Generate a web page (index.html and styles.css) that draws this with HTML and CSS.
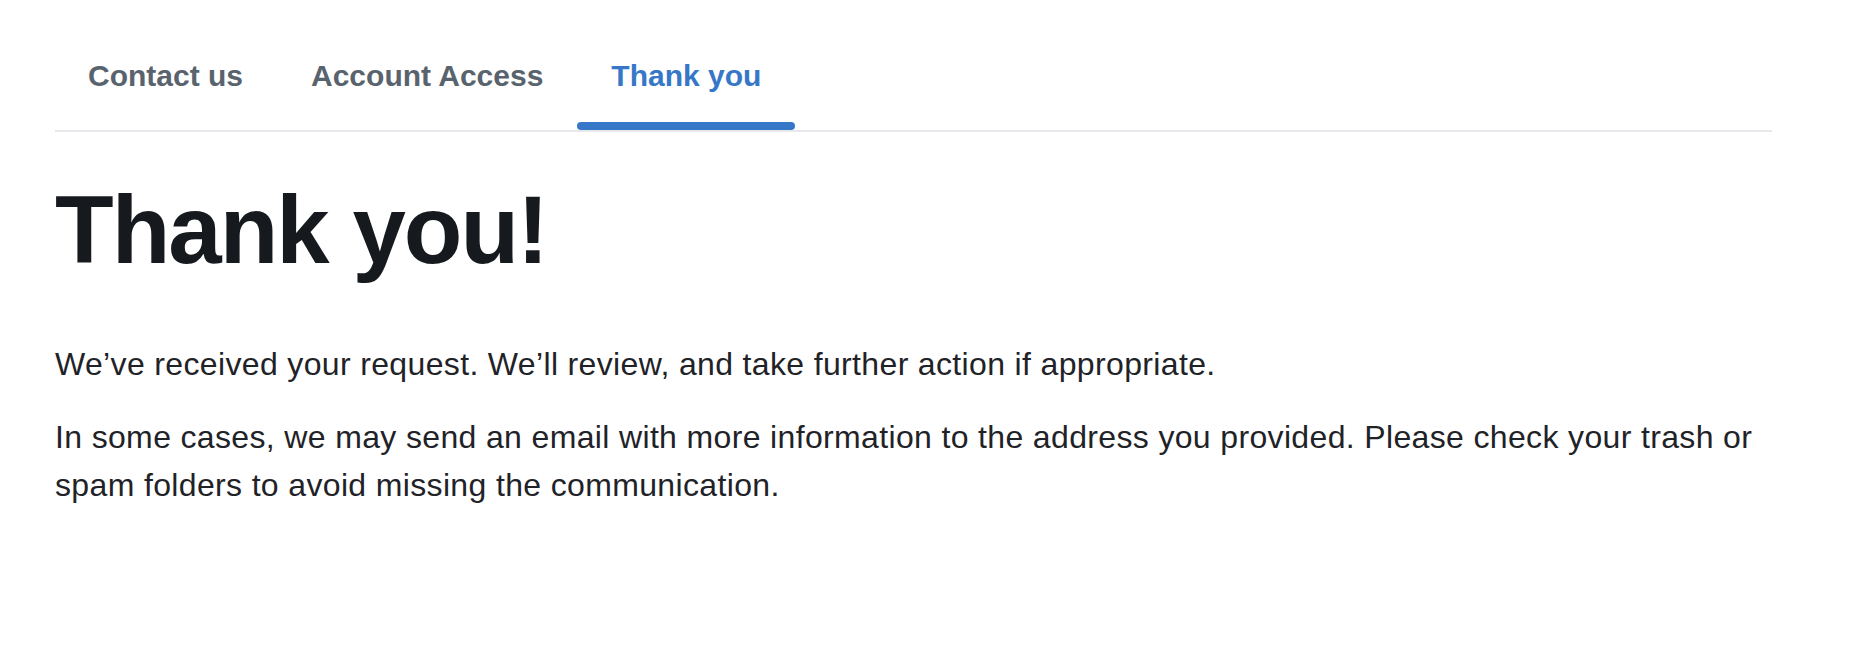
FILE: index.html
```html
<!DOCTYPE html>
<html lang="en">
<head>
  <meta charset="UTF-8" />
  <title>Thank you</title>
  <link rel="stylesheet" href="styles.css">
</head>
<body>
  <div class="container">
    <nav class="tabs">
      <a class="tab" href="#">Contact us</a>
      <a class="tab" href="#">Account Access</a>
      <a class="tab active" href="#">Thank you</a>
    </nav>

    <h1 class="title">Thank you!</h1>

    <p>We’ve received your request. We’ll review, and take further action if appropriate.</p>
    <p>In some cases, we may send an email with more information to the address you provided. Please check your trash or spam folders to avoid missing the communication.</p>
  </div>
</body>
</html>
```

FILE: styles.css
```css
body {
  margin: 0;
  font-family: "Liberation Sans", Arial, sans-serif;
  color: #1f2328;
  background-color: #fff;
}
.container {
  margin: 0 78px 0 55px;
}
.tabs {
  display: flex;
  padding-top: 58px;
  border-bottom: 2px solid #e6e8eb;
}
.tab {
  position: relative;
  padding: 0 34px 36px;
  font-size: 30px;
  line-height: 36px;
  font-weight: bold;
  color: #59636e;
  text-decoration: none;
}
.tab:first-child {
  margin-left: -1px;
}
.tab.active {
  color: #3677c8;
}
.tab.active::after {
  content: "";
  position: absolute;
  left: 0;
  right: 0;
  bottom: 0;
  height: 8px;
  border-radius: 4px;
  background-color: #3677c8;
}
.title {
  margin: 38px 0 50px;
  font-size: 96px;
  line-height: 120px;
  font-weight: bold;
  letter-spacing: -2px;
  color: #16191d;
}
p {
  margin: 0 0 25px;
  font-size: 32px;
  line-height: 48px;
  letter-spacing: 0.35px;
}
```
